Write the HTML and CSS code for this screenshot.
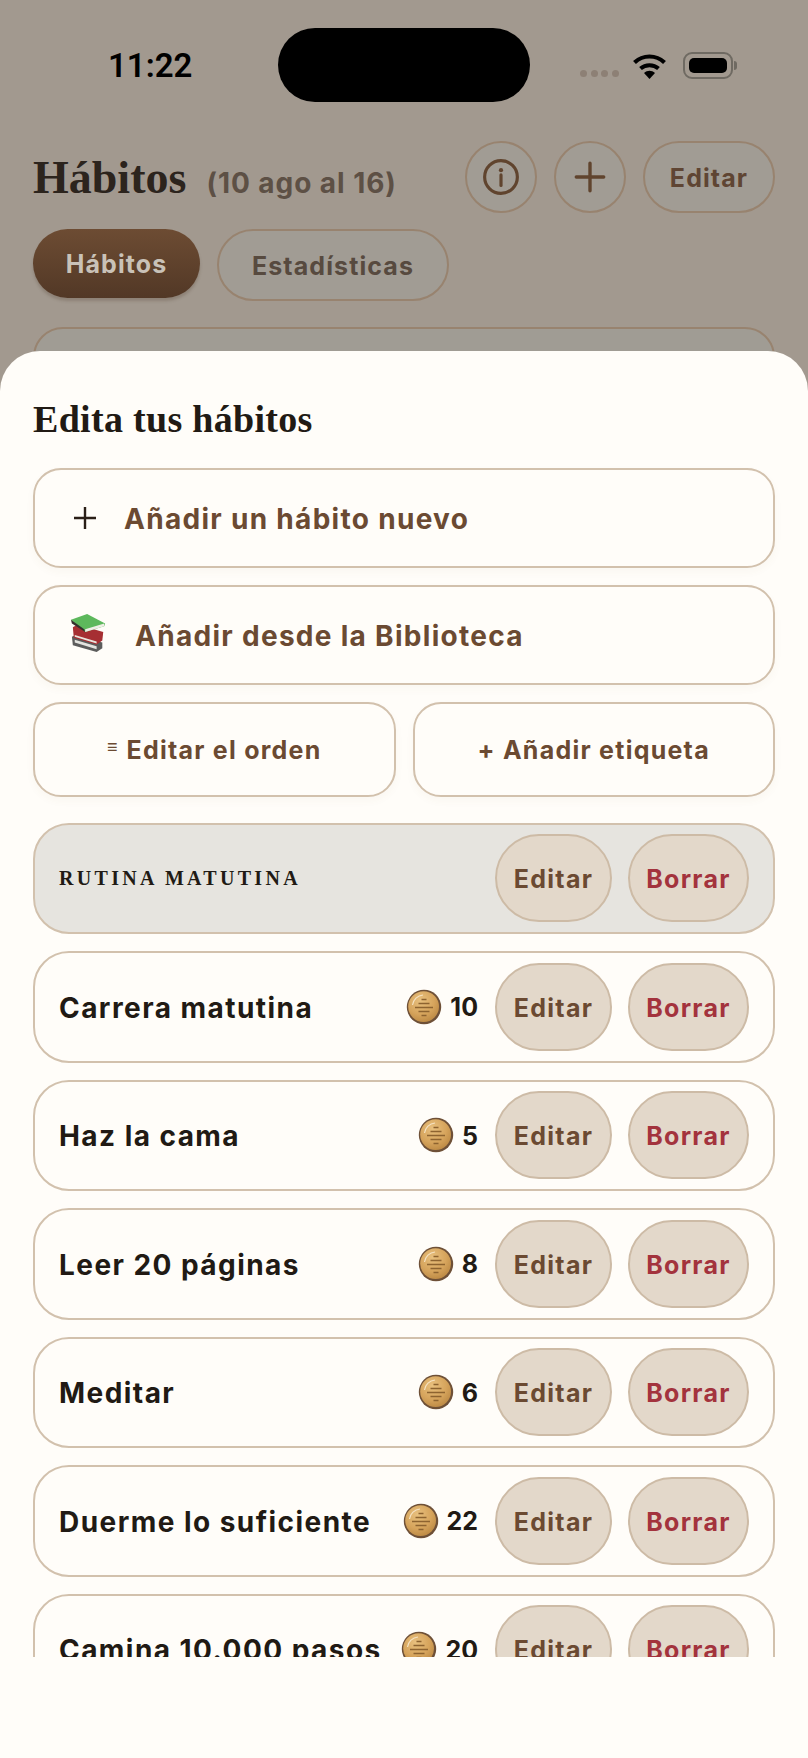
FILE: index.html
```html
<!DOCTYPE html>
<html lang="es">
<head>
<meta charset="utf-8">
<title>Hábitos</title>
<link rel="stylesheet" href="styles.css">
</head>
<body>
<svg class="defs" width="0" height="0" aria-hidden="true">
  <defs>
    <radialGradient id="coinFill" cx="40%" cy="30%" r="75%">
      <stop offset="0" stop-color="#e8c07e"/>
      <stop offset="0.6" stop-color="#d6a45c"/>
      <stop offset="1" stop-color="#bb8843"/>
    </radialGradient>
    <symbol id="coin" viewBox="0 0 36 36">
      <circle cx="18" cy="18" r="17.200" fill="#6e5037"/>
      <circle cx="17.600" cy="17.600" r="15.400" fill="url(#coinFill)"/>
      <path d="M6.500 16A11.500 11.500 0 0 1 17 6" fill="none" stroke="#f5e2c2" stroke-width="1.200"/>
      <g stroke="#8d6330" stroke-width="1.500">
        <path d="M15.500 10.500h5M12.500 14.500h11M9 18.500h18M12.500 22.500h11M15.500 26.500h5"/>
      </g>
    </symbol>
  </defs>
</svg>
<div class="backdrop">
  <div class="status">
    <span class="time">11:22</span>
    <span class="island"></span>
    <span class="dots"><i></i><i></i><i></i><i></i></span>
    <svg class="wifi" viewBox="0 0 34 26" aria-hidden="true">
      <path d="M2 9.500C10.500 1.500 23.500 1.500 32 9.500" fill="none" stroke="#000" stroke-width="4.200"/>
      <path d="M8 15.500C13 11 21 11 26 15.500" fill="none" stroke="#000" stroke-width="4"/>
      <path d="M11.500 20 17 26 22.500 20C19 17 15 17 11.500 20Z" fill="#000"/>
    </svg>
    <span class="battery"><b></b></span>
  </div>
  <div class="head">
    <h1 class="page-title">Hábitos</h1>
    <span class="range">(10 ago al 16)</span>
    <span class="head-actions">
      <span class="round">
        <svg class="round-icon" viewBox="0 0 36 36" aria-hidden="true">
          <circle cx="18" cy="18" r="15.500" fill="none" stroke="#60442e" stroke-width="3"/>
          <circle cx="18" cy="11.500" r="2" fill="#60442e"/>
          <path d="M18 16v10" stroke="#60442e" stroke-width="3" stroke-linecap="round"/>
        </svg>
      </span>
      <span class="round">
        <svg class="round-icon" viewBox="0 0 36 36" aria-hidden="true">
          <path d="M18 5v26M5 18h26" stroke="#60442e" stroke-width="3.200" stroke-linecap="round"/>
        </svg>
      </span>
      <span class="pill-edit">Editar</span>
    </span>
  </div>
  <div class="tabs">
    <span class="tab tab-on">Hábitos</span>
    <span class="tab tab-off">Estadísticas</span>
  </div>
  <div class="back-card"></div>
</div>

<section class="sheet">
  <h2 class="sheet-title">Edita tus hábitos</h2>
  <div class="actions">
    <div class="action action-plus">
      <svg class="plus" viewBox="0 0 22 22" aria-hidden="true"><path d="M11 0v22M0 11h22" stroke="#2a1f17" stroke-width="2.400"/></svg>
      <span>Añadir un hábito nuevo</span>
    </div>
    <div class="action action-lib">
      <svg class="books" viewBox="0 0 40 40" aria-hidden="true">
        <path d="M2 24 6 22 34 30 34 36 28 40 3 33Z" fill="#5c5c5c"/>
        <path d="M5 27 28 34 28 37 5 30Z" fill="#e4e4e0"/>
        <path d="M3 14 8 11 35 19 34 28 28 32 4 25Z" fill="#a62f33"/>
        <path d="M5 22 28 29 28 31 5 24Z" fill="#e9e5de"/>
        <path d="M1 6 18 0 37 10 36 13 16 19Z" fill="#5db85c"/>
        <path d="M1 6 15 16 16 19 2 10Z" fill="#33302c"/>
        <path d="M16 16 36 10 36 13 16 19Z" fill="#efeee6"/>
      </svg>
      <span>Añadir desde la Biblioteca</span>
    </div>
    <div class="action-pair">
      <div class="action action-small"><span class="bars">≡</span> Editar el orden</div>
      <div class="action action-small">+ Añadir etiqueta</div>
    </div>
  </div>
  <div class="list">
    <div class="row row-group">
      <span class="group-name">RUTINA MATUTINA</span>
      <span class="btn btn-edit">Editar</span><span class="btn btn-del">Borrar</span>
    </div>
    <div class="row">
      <span class="name">Carrera matutina</span>
      <span class="points"><svg class="coin"><use href="#coin"/></svg>10</span>
      <span class="btn btn-edit">Editar</span><span class="btn btn-del">Borrar</span>
    </div>
    <div class="row">
      <span class="name">Haz la cama</span>
      <span class="points"><svg class="coin"><use href="#coin"/></svg>5</span>
      <span class="btn btn-edit">Editar</span><span class="btn btn-del">Borrar</span>
    </div>
    <div class="row">
      <span class="name">Leer 20 páginas</span>
      <span class="points"><svg class="coin"><use href="#coin"/></svg>8</span>
      <span class="btn btn-edit">Editar</span><span class="btn btn-del">Borrar</span>
    </div>
    <div class="row">
      <span class="name">Meditar</span>
      <span class="points"><svg class="coin"><use href="#coin"/></svg>6</span>
      <span class="btn btn-edit">Editar</span><span class="btn btn-del">Borrar</span>
    </div>
    <div class="row">
      <span class="name">Duerme lo suficiente</span>
      <span class="points"><svg class="coin"><use href="#coin"/></svg>22</span>
      <span class="btn btn-edit">Editar</span><span class="btn btn-del">Borrar</span>
    </div>
    <div class="row">
      <span class="name">Camina 10.000 pasos</span>
      <span class="points"><svg class="coin"><use href="#coin"/></svg>20</span>
      <span class="btn btn-edit">Editar</span><span class="btn btn-del">Borrar</span>
    </div>
  </div>
</section>
</body>
</html>
```
FILE: styles.css
```css
* { box-sizing: border-box; }
html, body { margin: 0; padding: 0; }
body {
  position: relative;
  width: 808px;
  height: 1758px;
  overflow: hidden;
  background: #a2998f;
  font-family: "Inter", "Liberation Sans", sans-serif;
}
.defs { position: absolute; }

/* backdrop */
.backdrop { height: 351px; padding: 28px 33px 0; overflow: hidden; }
.status { position: relative; height: 74px; }
.time {
  position: absolute; left: 75px; top: 18px;
  font: 600 33px/40px "Roboto", "Liberation Sans", sans-serif;
  color: #000;
}
.island {
  position: absolute; left: 245px; top: 0;
  width: 252px; height: 74px;
  border-radius: 37px; background: #000;
}
.dots { position: absolute; left: 547px; top: 42px; display: flex; gap: 3.500px; }
.dots i { width: 7px; height: 7px; border-radius: 50%; background: #8d8075; }
.wifi { position: absolute; left: 599px; top: 25px; width: 35px; height: 26px; }
.battery {
  position: absolute; left: 650px; top: 24px;
  width: 50px; height: 27px; padding: 4px;
  border: 2px solid #6f6a62; border-radius: 9px;
}
.battery::after {
  content: ""; position: absolute; right: -6px; top: 7px;
  width: 3px; height: 9px; border-radius: 0 3px 3px 0; background: #6f6a62;
}
.battery b { display: block; height: 100%; border-radius: 5px; background: #000; }

.head { display: flex; align-items: center; height: 72px; margin-top: 39px; }
.page-title {
  margin: 2px 0 0;
  font: 700 46px/72px "Liberation Serif", serif;
  color: #2c241d;
}
.range {
  margin: 11px 0 0 20px;
  font: 700 28px/40px "Inter", sans-serif;
  color: #5d5045;
  letter-spacing: 0.950px;
}
.head-actions { display: flex; gap: 17px; margin-left: auto; }
.round, .pill-edit {
  display: flex; align-items: center; justify-content: center;
  height: 72px; border: 2px solid #98836f; border-radius: 36px; background: #a19c94;
}
.round { width: 72px; }
.round-icon { width: 38px; height: 38px; }
.pill-edit { width: 132px; padding-top: 2px; font-weight: 700; font-size: 25px; letter-spacing: 1.100px; color: #5f4533; }
.tabs { display: flex; gap: 17px; margin-top: 16px; align-items: flex-start; }
.tab {
  display: flex; align-items: center; justify-content: center;
  height: 72px; padding-top: 2px; border-radius: 36px; font-weight: 700; font-size: 25px; letter-spacing: 1.100px;
}
.tab-on {
  width: 167px; height: 69px; padding-top: 0;
  background: linear-gradient(#6d4c33, #523826);
  color: #c9c2b8;
  box-shadow: 0 3px 3px rgba(80, 60, 45, .25);
}
.tab-off { width: 232px; border: 2px solid #98836f; background: #a19c94; color: #574a3f; }
.back-card {
  height: 120px; margin-top: 26px;
  border: 2px solid #98836f; border-radius: 30px; background: #a09c94;
}

/* sheet */
.sheet {
  position: absolute; left: 0; right: 0; top: 351px; bottom: 0;
  padding: 0 33px;
  background: #fffdf9;
  border-radius: 40px 40px 0 0;
}
.sheet-title {
  margin: 0; padding-top: 44px; height: 117px;
  font: 700 38px/48px "Liberation Serif", serif;
  letter-spacing: 0.300px;
  color: #211a14;
}
.actions { display: flex; flex-direction: column; gap: 17px; }
.action {
  display: flex; align-items: center;
  height: 100px; border: 2px solid #d2c1ad; border-radius: 28px;
  background: #fffdf9;
  box-shadow: 0 4px 8px rgba(120, 90, 60, .04);
  font-weight: 700; font-size: 28px; letter-spacing: 1.300px; color: #6b4a32;
}
.action span { padding-top: 2px; }
.action-plus { padding-left: 39px; gap: 28px; }
.plus { width: 22px; height: 22px; }
.action-lib { padding-left: 35px; gap: 27px; }
.books { width: 38px; height: 40px; margin-top: -4px; }
.action-pair { display: flex; gap: 17px; }
.action-small {
  flex: 1; height: 95px; justify-content: center;
  font-size: 25px; letter-spacing: 1.250px; gap: 9px;
}
.action-small .bars { font-size: 18px; padding: 0 0 5px; letter-spacing: 0; }

.list {
  display: flex; flex-direction: column; gap: 17px;
  margin-top: 25.500px;
  height: 834.500px; overflow: hidden;
}
.row {
  display: flex; align-items: center; flex: none;
  height: 111.500px; padding: 0 24px;
  border: 2px solid #d2c1ad; border-radius: 36px;
  background: #fffdf9;
}
.row-group { background: #e6e4df; }
.group-name {
  flex: 1;
  font: 700 20px/24px "Liberation Serif", serif;
  letter-spacing: 3.300px; color: #211a14;
}
.name { flex: 1; padding-top: 2px; font-weight: 700; font-size: 28px; color: #211a14; white-space: nowrap; letter-spacing: 1.450px; }
.points {
  display: flex; align-items: center; gap: 8px;
  margin-right: 17px; padding-top: 1px;
  font-weight: 700; font-size: 25px; color: #211a14;
}
.coin { width: 36px; height: 36px; margin-top: -1px; }
.btn {
  display: flex; align-items: center; justify-content: center;
  height: 88px; padding: 2px 0 0;
  border: 2px solid #cdbba6; border-radius: 44px;
  background: #e3d8ca;
  font-weight: 700; font-size: 25px; letter-spacing: 1.300px;
}
.btn-edit { color: #6b4a32; width: 117px; }
.btn-del { color: #a3333d; width: 121px; margin-left: 16px; }
```
